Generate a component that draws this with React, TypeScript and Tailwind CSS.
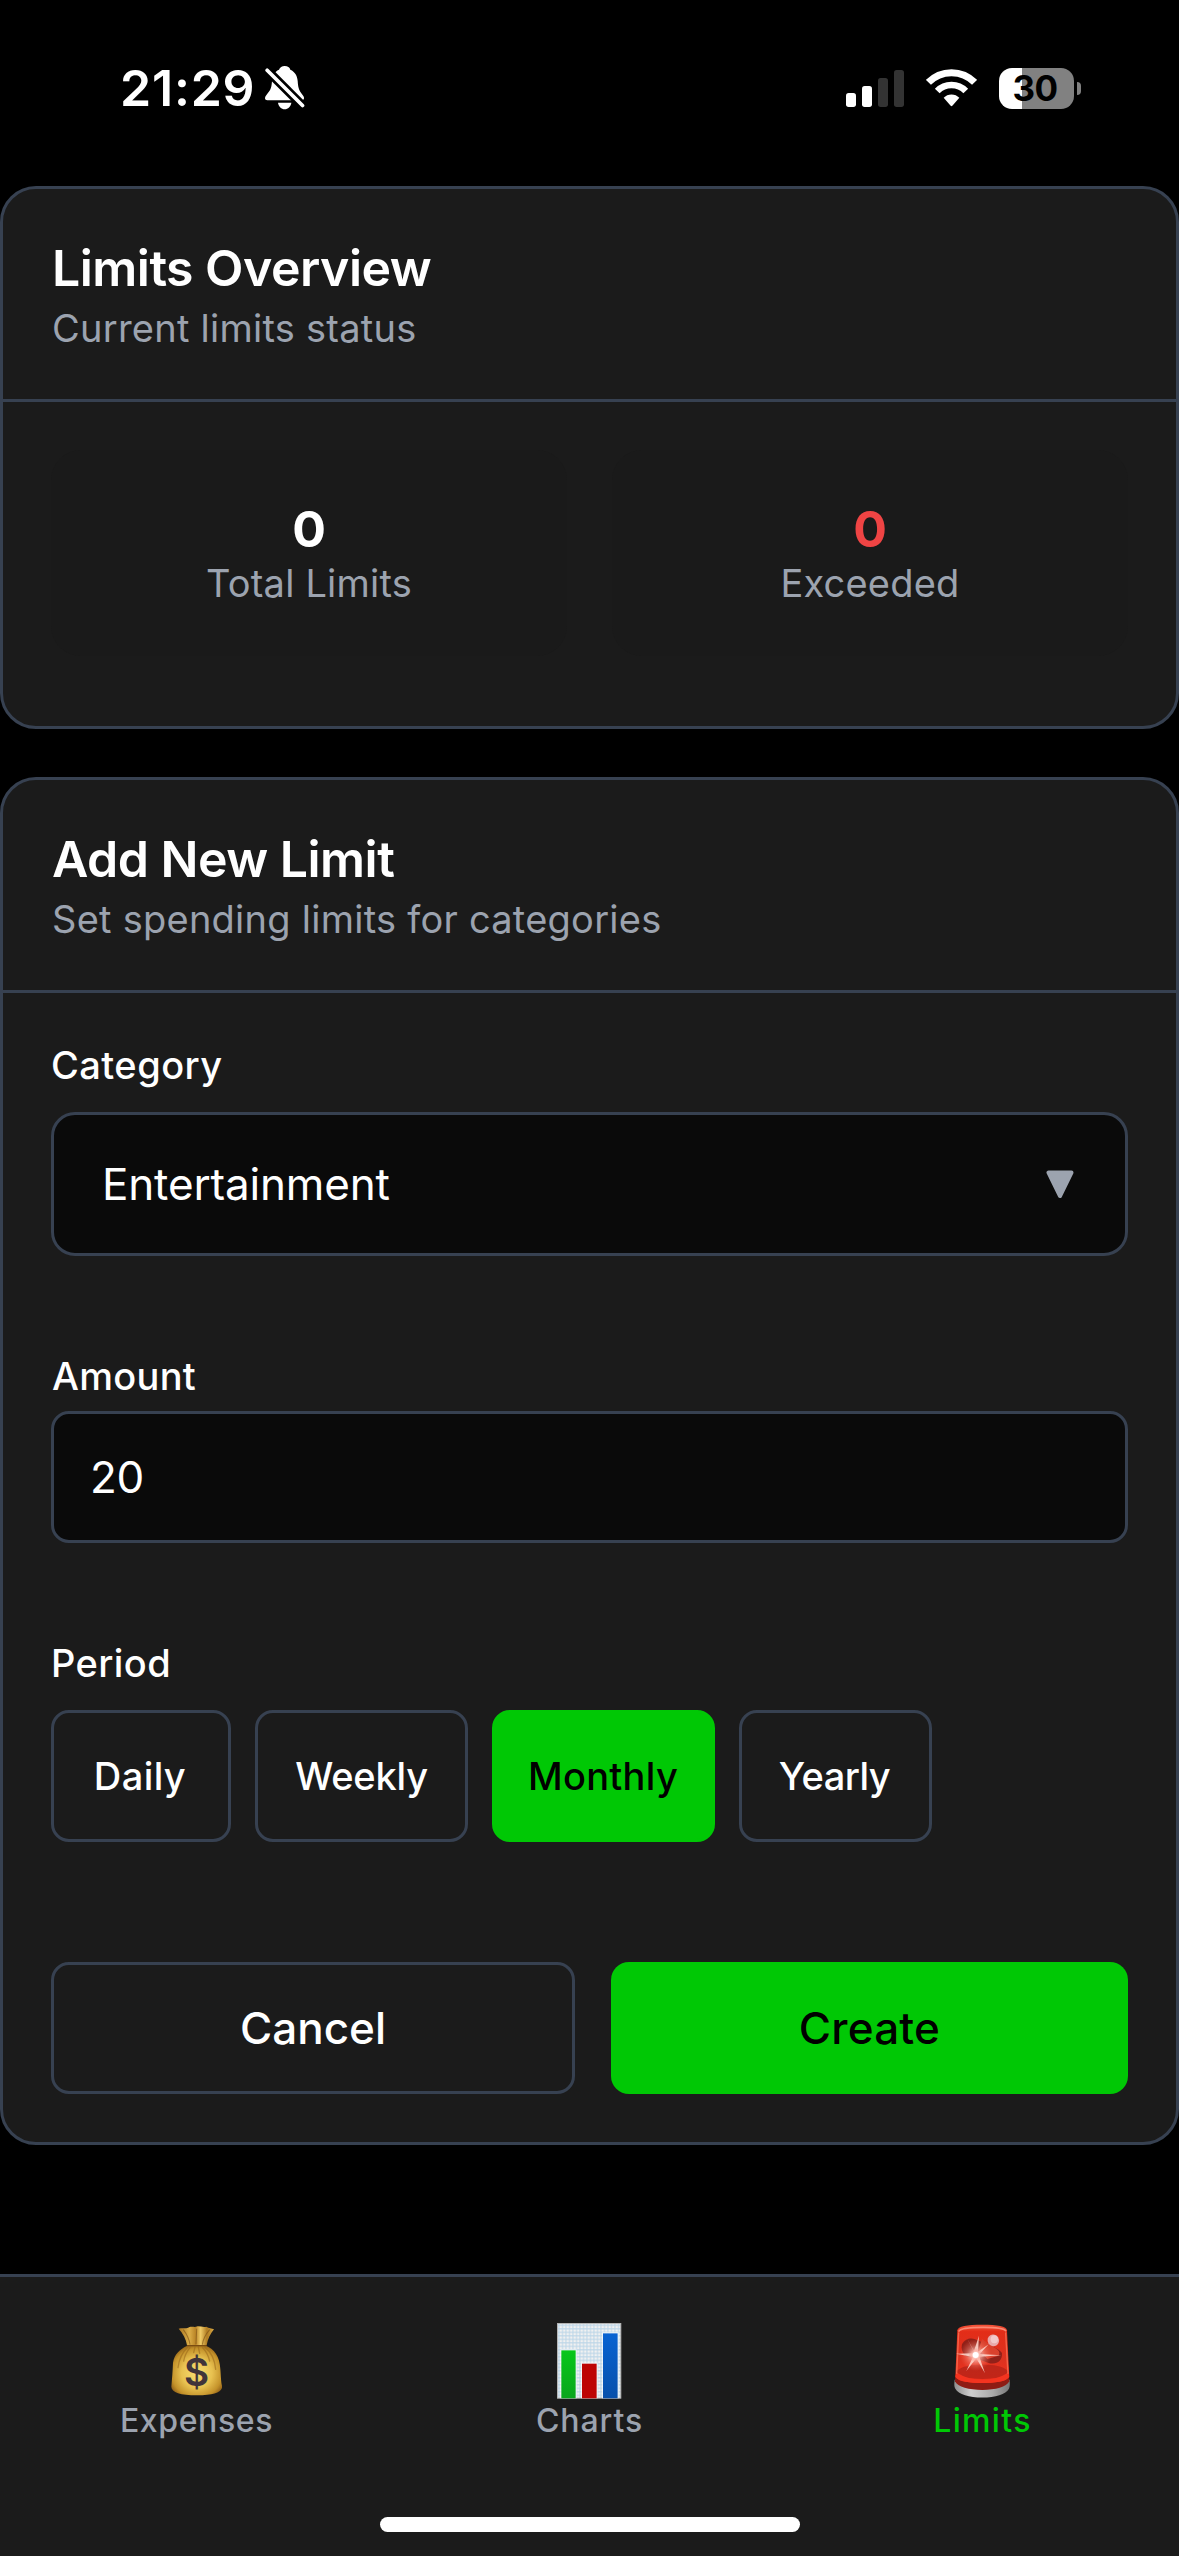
import React, { useState } from "react";
import type { ReactNode } from "react";

function BellOffIcon() {
  return (
    <svg className="h-[43.4px] w-[39.7px]" viewBox="497 50 119 130" fill="none">
      <path
        fill="#fff"
        d="M556 50C548 50 541 55 539 61C525 67 519 80 518 95C517 113 514 122 504 133C499 139 497 143 497 147C497 151 500 152.5 504 152.5H607C612 152.5 614 150 614 146C614 142 611 138 607 133C598 122 596 112 595 95C594 80 587 67 573 61C571 54 565 50 556 50Z"
      />
      <path fill="#fff" d="M536 160H576C574 172 566 179.500 556 179.500C546 179.500 538 172 536 160Z" />
      <path stroke="#000" strokeWidth="27" d="M490 49L622 181" />
      <path stroke="#fff" strokeWidth="11" strokeLinecap="round" d="M503.500 62.500L609.500 168.500" />
    </svg>
  );
}

function SignalIcon() {
  return (
    <svg className="h-[37px] w-[58px]" viewBox="78 57 174 111">
      <rect x="78" y="126" width="30" height="42" rx="8" fill="#fff" />
      <rect x="126" y="105" width="30" height="63" rx="8" fill="#fff" />
      <rect x="174" y="81" width="30" height="87" rx="8" fill="#333" />
      <rect x="222" y="57" width="30" height="111" rx="8" fill="#333" />
    </svg>
  );
}

function WifiIcon() {
  return (
    <svg className="h-[37.3px] w-[51px]" viewBox="318 56 153 112" fill="none">
      <path stroke="#fff" strokeWidth="21" d="M325.300 96A97 97 0 0 1 463.700 96" />
      <path stroke="#fff" strokeWidth="20" d="M351.700 122A60 60 0 0 1 437.300 122" />
      <path fill="#fff" d="M371 142.500A32 32 0 0 1 418 142.500L397 166.500Q394.500 169 392 166.500Z" />
    </svg>
  );
}

function Battery() {
  return (
    <div className="flex items-center gap-[3px]">
      <div className="flex h-[41px] w-[75px] items-center justify-center rounded-[13px] bg-[linear-gradient(to_right,#fff_23px,#818181_23px)] pr-[3px] text-[35px] font-bold tracking-[-0.6px] text-black">
        30
      </div>
      <div className="h-[13px] w-1 rounded-r-full bg-[#818181]" />
    </div>
  );
}

function MoneyBagIcon() {
  return (
    <svg className="h-[69.7px] w-[51.7px]" viewBox="212 80 155 209">
      <defs>
        <radialGradient id="bag" cx="0.5" cy="0.55" r="0.6">
          <stop offset="0" stopColor="#f8dd72" />
          <stop offset="0.5" stopColor="#e8c150" />
          <stop offset="0.82" stopColor="#c4922a" />
          <stop offset="1" stopColor="#8a5a16" />
        </radialGradient>
        <linearGradient id="neck" x1="0" x2="1" y1="0" y2="0">
          <stop offset="0" stopColor="#a87420" />
          <stop offset="0.3" stopColor="#dcae48" />
          <stop offset="0.48" stopColor="#b98427" />
          <stop offset="0.62" stopColor="#f0cb66" />
          <stop offset="0.8" stopColor="#b07c22" />
          <stop offset="1" stopColor="#d9a944" />
        </linearGradient>
      </defs>
      <path
        fill="url(#bag)"
        d="M261 139C238 149 222 165 218 190C217 215 215 240 213 262C214 279 240 288 290 288C340 288 362 280 366 263C362 250 362 235 360 210C358 170 342 150 317 139Z"
      />
      <path
        fill="none"
        stroke="#9c6a1c"
        strokeOpacity="0.6"
        strokeWidth="4"
        strokeLinecap="round"
        d="M262 144C245 160 236 180 233 205M269 145C258 158 253 168 250 185M314 144C333 158 343 180 346 210M307 145C317 155 324 168 328 185M284 143L280 160M294 143L298 162"
      />
      <path
        fill="url(#neck)"
        d="M235 88C247 84 257 90 266 84C275 80 283 85 291 81C300 80 309 85 318 82C326 87 334 86 341 90C330 103 322 119 319 138H260C257 118 248 103 235 88Z"
      />
      <path fill="none" stroke="#7a4c12" strokeOpacity="0.6" strokeWidth="3" d="M249 91C261 107 267 121 269 136M289 88L287 135M328 91C315 106 308 121 306 136" />
      <path stroke="#7a4c12" strokeWidth="4" strokeLinecap="round" d="M261 139H317" />
      <text x="289" y="260" textAnchor="middle" fill="#41343a" className="font-['Inter'] text-[116px] font-semibold">
        $
      </text>
    </svg>
  );
}

function BarChartIcon() {
  return (
    <svg className="h-[75.7px] w-[64.3px]" viewBox="172 70 193 227">
      <defs>
        <pattern id="grid" x="173" y="72" width="10.500" height="10.500" patternUnits="userSpaceOnUse">
          <rect width="10.500" height="10.500" fill="#f1f1f1" />
          <path stroke="#bcd6e8" strokeWidth="3" d="M0 5H10.500M5 0V10.500" />
        </pattern>
        <linearGradient id="greenBar" x1="0" x2="0" y1="0" y2="1">
          <stop offset="0" stopColor="#08c71a" />
          <stop offset="1" stopColor="#0aa61c" />
        </linearGradient>
        <linearGradient id="blueBar" x1="0" x2="0" y1="0" y2="1">
          <stop offset="0" stopColor="#0863d2" />
          <stop offset="1" stopColor="#0750ab" />
        </linearGradient>
      </defs>
      <rect x="173.500" y="71.500" width="190" height="224" fill="url(#grid)" stroke="#b5b5b5" strokeWidth="3" />
      <rect x="182" y="149" width="49" height="147" fill="#fff" fillOpacity="0.7" />
      <rect x="244" y="189" width="50" height="107" fill="#fff" fillOpacity="0.7" />
      <rect x="307" y="98" width="50" height="198" fill="#fff" fillOpacity="0.7" />
      <rect x="185" y="152" width="43" height="144" fill="url(#greenBar)" />
      <rect x="247" y="192" width="44" height="104" fill="#bd0404" />
      <rect x="310" y="101" width="44" height="195" fill="url(#blueBar)" />
    </svg>
  );
}

function SirenIcon() {
  return (
    <svg className="h-[73.7px] w-[56.3px]" viewBox="222 73 169 221">
      <defs>
        <linearGradient id="base" x1="0" x2="1" y1="0" y2="0">
          <stop offset="0" stopColor="#8f8f8f" />
          <stop offset="0.3" stopColor="#cfcfcf" />
          <stop offset="0.7" stopColor="#a9a9a9" />
          <stop offset="1" stopColor="#767676" />
        </linearGradient>
        <linearGradient id="dome" x1="0" x2="0" y1="0" y2="1">
          <stop offset="0" stopColor="#f4553a" />
          <stop offset="0.12" stopColor="#e32d18" />
          <stop offset="0.6" stopColor="#dc3220" />
          <stop offset="1" stopColor="#f5301a" />
        </linearGradient>
        <radialGradient id="flare">
          <stop offset="0" stopColor="#fff" />
          <stop offset="0.25" stopColor="#ffe9e4" stopOpacity="0.95" />
          <stop offset="0.6" stopColor="#ff9c8c" stopOpacity="0.5" />
          <stop offset="1" stopColor="#ff6a55" stopOpacity="0" />
        </radialGradient>
      </defs>
      <path fill="url(#base)" d="M224 240C222 255 223 262 226 267C235 284 268 293.500 307 293.500C346 293.500 378 284 387 267C390 260 390 252 389 240Z" />
      <path fill="#8e1c14" d="M226 225L225 245C232 262 268 271 307 271C346 271 380 262 388 245L387 225Z" />
      <path fill="url(#dome)" d="M232 92C233 80 262 75 307 75C352 75 380 80 381 92L388 232C378 246 344 250 307 250C270 250 236 246 226 232Z" />
      <path fill="#a92017" fillOpacity="0.65" d="M229 215C245 198 275 195 307 195C340 195 370 198 385 215C382 232 350 238 307 238C262 238 232 232 229 215Z" />
      <path fill="#f43420" d="M229 218C255 236 285 240 307 240C330 240 360 236 386 218L387 232C378 246 344 250 307 250C270 250 236 246 227 232Z" />
      <path fill="#7d1d18" fillOpacity="0.8" d="M246 134C256 114 280 112 296 124L310 128C330 140 356 146 366 160C368 184 350 196 326 190L300 180L256 168C246 158 243 146 246 134Z" />
      <path fill="#d9412d" d="M306 118L340 142C356 150 362 158 356 168L322 178L296 150Z" />
      <ellipse cx="340" cy="122" rx="17" ry="18" fill="#e9a9ab" transform="rotate(-30 340 122)" />
      <ellipse cx="343" cy="119" rx="11" ry="12" fill="#f2c8ca" />
      <path fill="none" stroke="#ffa18c" strokeWidth="5" strokeLinecap="round" strokeOpacity="0.75" d="M237 94C246 80 366 79 377 93" />
      <path fill="none" stroke="#ff7a5c" strokeWidth="4" strokeOpacity="0.7" d="M236 98L230 222M377 98L384 222" />
      <circle cx="287" cy="166" r="48" fill="url(#flare)" opacity="0.75" />
      <path
        fill="#ffd9d0"
        fillOpacity="0.85"
        d="M287 166L262 117L282 154L297 108L294 156L326 134L299 163L364 167L298 171L315 221L289 176L259 214L279 172L228 162L279 161Z"
      />
      <circle cx="287" cy="166" r="22" fill="url(#flare)" />
      <circle cx="287" cy="166" r="9" fill="#fff" />
    </svg>
  );
}

function Card({ title, subtitle, children }: { title: string; subtitle: string; children: ReactNode }) {
  return (
    <section className="rounded-[36px] border-3 border-[#374151] bg-[#1b1b1b]">
      <header className="h-[213px] border-b-3 border-[#374151] px-[49px] pt-[49px]">
        <h2 className="text-[50px] leading-[60px] font-semibold tracking-[-0.52px]">{title}</h2>
        <p className="mt-[3px] text-[38px] leading-[54px] tracking-[0.25px] text-[#9ca3af]">{subtitle}</p>
      </header>
      {children}
    </section>
  );
}

function Stat({ value, label, danger = false }: { value: number; label: string; danger?: boolean }) {
  return (
    <div className="flex h-[206px] flex-1 flex-col items-center rounded-[30px] bg-[#1a1a1a] pt-[50px]">
      <span className={`text-[50px] leading-[58px] font-bold ${danger ? "text-[#ef4444]" : "text-white"}`}>{value}</span>
      <span className="text-[38px] leading-[50px] tracking-[0.2px] text-[#9ca3af]">{label}</span>
    </div>
  );
}

const periods = [
  { name: "Daily", size: "w-[180px] pr-[2px] tracking-[0.4px]" },
  { name: "Weekly", size: "w-[213px] tracking-[-0.2px]" },
  { name: "Monthly", size: "w-[223px] pr-px tracking-[0.3px]" },
  { name: "Yearly", size: "w-[193px] pr-[2px] tracking-[-0.5px]" },
];

const tabs = [
  { name: "Expenses", icon: <MoneyBagIcon />, style: "tracking-[0.62px] text-[#9ca3af]" },
  { name: "Charts", icon: <BarChartIcon />, style: "tracking-[0.92px] text-[#9ca3af]" },
  { name: "Limits", icon: <SirenIcon />, style: "tracking-[1.35px] text-[#00c805]" },
];

export default function App() {
  const [period, setPeriod] = useState("Monthly");
  const [amount, setAmount] = useState("20");

  return (
    <div className="flex h-[2556px] w-[1179px] flex-col overflow-hidden bg-black font-['Inter',sans-serif] text-white">
      <div className="flex h-[176px] shrink-0 items-center justify-between pr-[98px] pl-[120px]">
        <div className="flex items-center gap-[10px]">
          <span className="text-[50px] leading-none font-semibold tracking-[0.8px]">21:29</span>
          <BellOffIcon />
        </div>
        <div className="flex items-center gap-[22px]">
          <SignalIcon />
          <WifiIcon />
          <Battery />
        </div>
      </div>

      <main className="flex flex-1 flex-col gap-12 pt-[10px]">
        <Card title="Limits Overview" subtitle="Current limits status">
          <div className="flex gap-[45px] px-12 pt-12 pb-[70px]">
            <Stat value={0} label="Total Limits" />
            <Stat value={0} label="Exceeded" danger />
          </div>
        </Card>

        <Card title="Add New Limit" subtitle="Set spending limits for categories">
          <div className="flex flex-col px-12 pt-[45px] pb-12">
            <span className="text-[38px] leading-[54px] font-medium tracking-[0.45px]">Category</span>
            <button className="mt-5 flex h-36 items-center justify-between rounded-[24px] border-3 border-[#374151] bg-[#0a0a0a] pr-[51px] pl-12">
              <span className="text-[44px] tracking-[-0.16px]">Entertainment</span>
              <svg className="h-[29px] w-7" viewBox="0 0 28 29">
                <path d="M2.500 2.500H25.500L14 26Z" fill="#9ca3af" stroke="#9ca3af" strokeWidth="4" strokeLinejoin="round" />
              </svg>
            </button>

            <label htmlFor="amount" className="mt-[93px] pl-px text-[38px] leading-[54px] font-medium tracking-[0.3px]">
              Amount
            </label>
            <input
              id="amount"
              value={amount}
              onChange={(e) => setAmount(e.target.value)}
              className="mt-[8px] h-[132px] rounded-[18px] border-3 border-[#374151] bg-[#0a0a0a] px-9 text-[44px] tracking-[-0.4px] outline-none"
            />

            <span className="mt-[93px] text-[38px] leading-[54px] font-medium tracking-[0.4px]">Period</span>
            <div className="mt-5 flex gap-6">
              {periods.map(({ name, size }) => (
                <button
                  key={name}
                  onClick={() => setPeriod(name)}
                  className={`h-[132px] rounded-[18px] border-3 text-[38px] font-medium ${size} ${
                    name === period ? "border-[#00c805] bg-[#00c805] text-black" : "border-[#374151]"
                  }`}
                >
                  {name}
                </button>
              ))}
            </div>

            <div className="mt-[120px] flex gap-9">
              <button className="h-[132px] w-[524px] rounded-[18px] border-3 border-[#374151] text-[44px] font-medium">
                Cancel
              </button>
              <button className="h-[132px] flex-1 rounded-[18px] bg-[#00c805] text-[44px] font-medium tracking-[0.2px] text-black">
                Create
              </button>
            </div>
          </div>
        </Card>
      </main>

      <nav className="flex h-[282px] shrink-0 flex-col items-center justify-between border-t-3 border-[#374151] bg-[#1b1b1b] pt-11 pb-6">
        <div className="grid w-full grid-cols-3">
          {tabs.map(({ name, icon, style }) => (
            <button key={name} className="flex flex-col items-center">
              <span className="flex h-20 items-center">{icon}</span>
              <span className={`text-[32px] leading-10 font-medium ${style}`}>{name}</span>
            </button>
          ))}
        </div>
        <div className="h-[15px] w-[420px] rounded-full bg-white" />
      </nav>
    </div>
  );
}
